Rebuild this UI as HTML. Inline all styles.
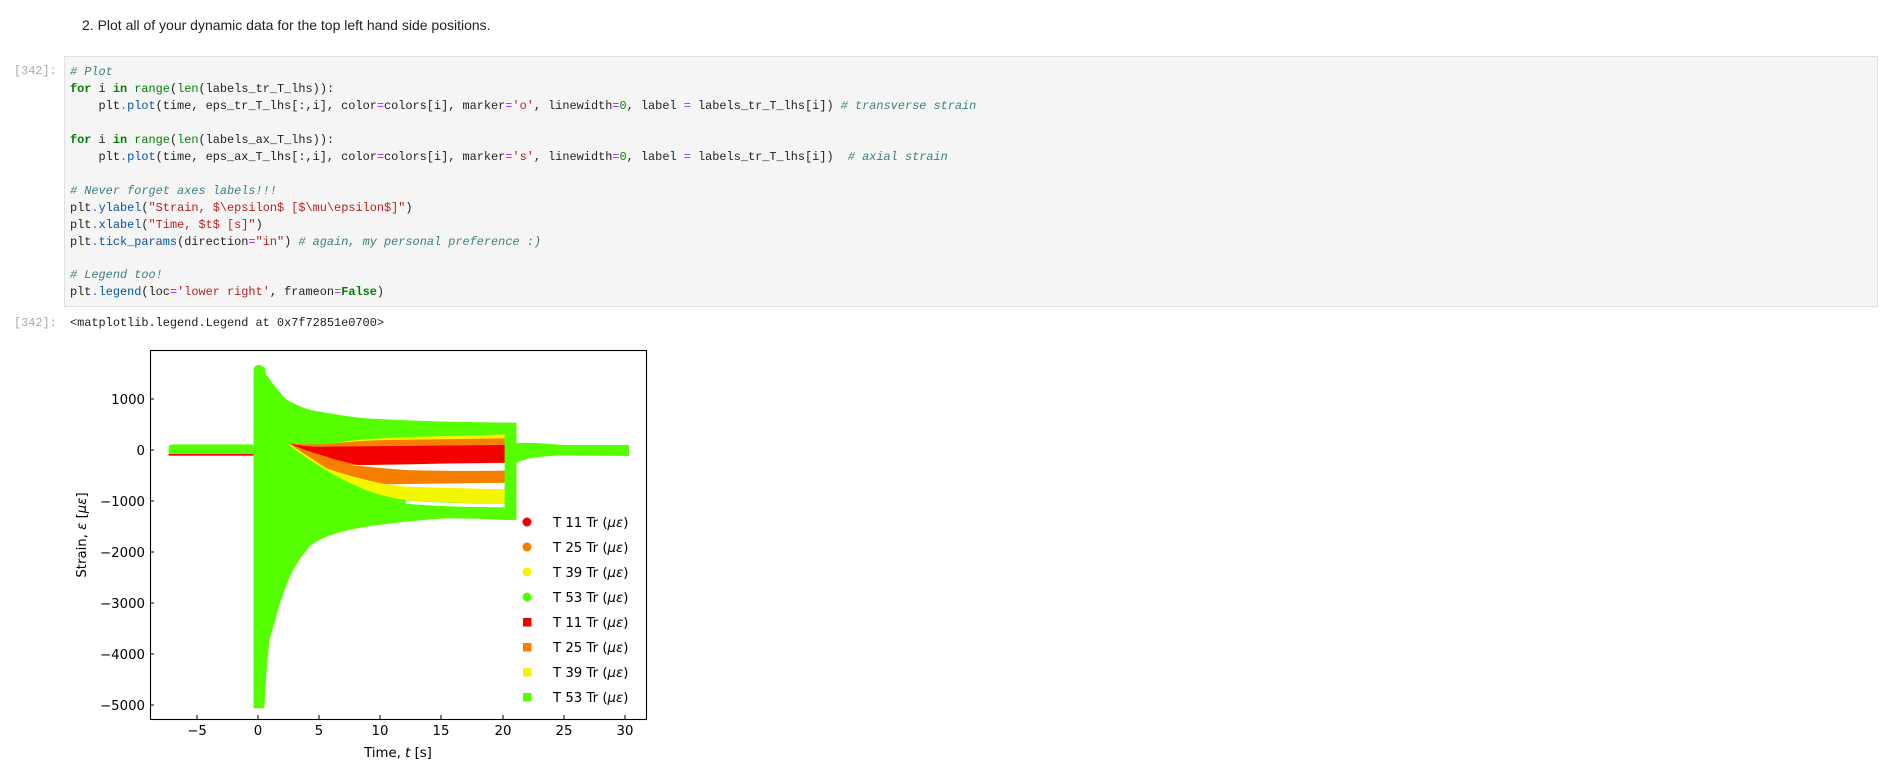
<!DOCTYPE html>
<html><head><meta charset="utf-8"><style>
body{margin:0;background:#fff;width:1880px;height:775px;overflow:hidden;position:relative;font-family:"Liberation Sans",sans-serif}
.h{position:absolute;left:82px;top:17px;font-size:14px;color:#222}
.p{position:absolute;left:14px;font-family:"Liberation Mono",monospace;font-size:11.9px;color:#aaa}
.cell{position:absolute;left:64px;top:56px;width:1812px;height:249px;background:#f5f5f5;border:1px solid #e0e0e0}
pre{margin:0;position:absolute;left:70px;top:64px;font-family:"Liberation Mono",monospace;font-size:11.9px;line-height:16.95px;color:#222}
.k{color:#008000;font-weight:bold}.b{color:#008000}.f{color:#0055aa}.s{color:#ba2121}.c{color:#408080;font-style:italic}.n{color:#080}.o{color:#aa22ff}
.out{position:absolute;left:70px;top:316px;font-family:"Liberation Mono",monospace;font-size:11.9px;color:#222}
svg{position:absolute;left:0;top:0}
</style></head><body>
<div class="h">2. Plot all of your dynamic data for the top left hand side positions.</div>
<div class="p" style="top:64px">[342]:</div>
<div class="cell"></div>
<pre><span class="c"># Plot</span>
<span class="k">for</span> i <span class="k">in</span> <span class="b">range</span>(<span class="b">len</span>(labels_tr_T_lhs)):
    plt<span class="o">.</span><span class="f">plot</span>(time, eps_tr_T_lhs[:,i], color<span class="o">=</span>colors[i], marker<span class="o">=</span><span class="s">'o'</span>, linewidth<span class="o">=</span><span class="n">0</span>, label <span class="o">=</span> labels_tr_T_lhs[i]) <span class="c"># transverse strain</span>

<span class="k">for</span> i <span class="k">in</span> <span class="b">range</span>(<span class="b">len</span>(labels_ax_T_lhs)):
    plt<span class="o">.</span><span class="f">plot</span>(time, eps_ax_T_lhs[:,i], color<span class="o">=</span>colors[i], marker<span class="o">=</span><span class="s">'s'</span>, linewidth<span class="o">=</span><span class="n">0</span>, label <span class="o">=</span> labels_tr_T_lhs[i])  <span class="c"># axial strain</span>

<span class="c"># Never forget axes labels!!!</span>
plt<span class="o">.</span><span class="f">ylabel</span>(<span class="s">"Strain, $\epsilon$ [$\mu\epsilon$]"</span>)
plt<span class="o">.</span><span class="f">xlabel</span>(<span class="s">"Time, $t$ [s]"</span>)
plt<span class="o">.</span><span class="f">tick_params</span>(direction<span class="o">=</span><span class="s">"in"</span>) <span class="c"># again, my personal preference :)</span>

<span class="c"># Legend too!</span>
plt<span class="o">.</span><span class="f">legend</span>(loc<span class="o">=</span><span class="s">'lower right'</span>, frameon<span class="o">=</span><span class="k">False</span>)</pre>
<div class="p" style="top:316px">[342]:</div>
<div class="out">&lt;matplotlib.legend.Legend at 0x7f72851e0700&gt;</div>

<svg width="1880" height="775" xmlns="http://www.w3.org/2000/svg">
<g transform="translate(50,330) scale(0.3953,0.3333)">
<rect x="300" y="343" width="220" height="34" rx="10" fill="#55ff00"/>
<rect x="300" y="372" width="215" height="5" fill="#f20000"/>
<path fill="#55ff00" d="M515,380 L515,115 Q525,95 545,115 L545,130 Q580,190 600,210 Q640,235 660,240 Q740,258 800,265 Q900,272 1000,275 L1150,278 Q1175,275 1180,300 L1180,340 Q1200,336 1300,345 L1465,345 L1465,378 L1300,376 Q1200,380 1180,400 L1180,570 L1150,570 Q1080,565 1000,565 Q880,575 800,590 Q730,605 700,620 Q660,640 650,660 Q620,700 600,760 Q580,820 570,870 L555,930 L548,1020 L542,1135 L515,1135 Z"/>
<path fill="#f5f500" d="M605,340 Q650,350 700,345 Q760,330 800,328 Q900,320 1000,318 L1152,313 L1152,520 Q1000,520 900,510 Q820,495 780,470 Q700,430 605,345 Z"/>
<path fill="#f77f00" d="M605,340 Q660,345 700,342 Q780,332 850,330 L1152,325 L1152,458 Q1000,460 850,463 Q760,440 700,415 Q640,370 605,340 Z"/>
<path fill="#f20000" d="M605,340 Q650,352 700,350 L1152,345 L1152,398 L1000,400 Q820,405 780,405 Q720,390 700,380 Q640,360 605,340 Z"/>
<path fill="#fff" d="M760,405 Q820,406 1000,401 L1152,399 L1152,422 Q1000,424 900,420 Q830,414 760,405 Z"/>
<path fill="#fff" d="M850,463 Q1000,461 1152,459 L1152,478 Q1000,474 900,470 Z"/>
<path fill="#fff" d="M900,511 Q1000,521 1152,521 L1152,532 Q1000,532 900,521 Z"/>
<rect x="1150" y="278" width="30" height="292" fill="#55ff00"/>
</g>
<rect x="150.5" y="350.5" width="496" height="369" fill="none" stroke="#000" stroke-width="1.1"/>
<g stroke="#000" stroke-width="1">
<path d="M197,719v-4M258,719v-4M319,719v-4M380,719v-4M441,719v-4M503,719v-4M564,719v-4M625,719v-4"/>
<path d="M150,399h4M150,450h4M150,501h4M150,552h4M150,603h4M150,654h4M150,705h4"/>
</g>
<g font-family="DejaVu Sans,sans-serif" font-size="13.3" fill="#000">
<g text-anchor="middle">
<text x="197" y="735">−5</text><text x="258" y="735">0</text><text x="319" y="735">5</text><text x="380" y="735">10</text><text x="441" y="735">15</text><text x="503" y="735">20</text><text x="564" y="735">25</text><text x="625" y="735">30</text>
<text x="398" y="757">Time, <tspan font-style="italic">t</tspan> [s]</text>
</g>
<g text-anchor="end">
<text x="145" y="404">1000</text><text x="145" y="455">0</text><text x="145" y="506">−1000</text><text x="145" y="557">−2000</text><text x="145" y="608">−3000</text><text x="145" y="659">−4000</text><text x="145" y="710">−5000</text>
</g>
<text transform="translate(86,535) rotate(-90)" text-anchor="middle">Strain, <tspan font-style="italic">ε</tspan> [<tspan font-style="italic">με</tspan>]</text>
<circle cx="527" cy="522" r="4.5" fill="#f20000"/><circle cx="527" cy="547" r="4.5" fill="#f77f00"/><circle cx="527" cy="572" r="4.5" fill="#f5f500"/><circle cx="527" cy="597" r="4.5" fill="#55ff00"/>
<rect x="523" y="618" width="8.5" height="8.5" fill="#f20000"/><rect x="523" y="643" width="8.5" height="8.5" fill="#f77f00"/><rect x="523" y="668" width="8.5" height="8.5" fill="#f5f500"/><rect x="523" y="693" width="8.5" height="8.5" fill="#55ff00"/>
<text x="553" y="527">T 11 Tr (<tspan font-style="italic">με</tspan>)</text>
<text x="553" y="552">T 25 Tr (<tspan font-style="italic">με</tspan>)</text>
<text x="553" y="577">T 39 Tr (<tspan font-style="italic">με</tspan>)</text>
<text x="553" y="602">T 53 Tr (<tspan font-style="italic">με</tspan>)</text>
<text x="553" y="627">T 11 Tr (<tspan font-style="italic">με</tspan>)</text>
<text x="553" y="652">T 25 Tr (<tspan font-style="italic">με</tspan>)</text>
<text x="553" y="677">T 39 Tr (<tspan font-style="italic">με</tspan>)</text>
<text x="553" y="702">T 53 Tr (<tspan font-style="italic">με</tspan>)</text>
</g>
</svg>
</body></html>
